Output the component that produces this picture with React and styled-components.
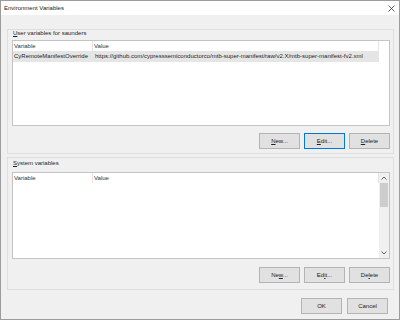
import React from 'react';
import styled, { createGlobalStyle } from 'styled-components';

const GlobalStyle = createGlobalStyle`
  html, body {
    margin: 0;
    padding: 0;
    background: #ffffff;
  }
  body {
    font-family: "Liberation Sans", Arial, sans-serif;
  }
`;

const Window = styled.div`
  width: 400px;
  height: 320px;
  box-sizing: border-box;
  border: 1px solid #9c9c9c;
  background: #f0f0f0;
  display: flex;
  flex-direction: column;
  font-size: 6px;
  color: #1e1e1e;
`;

const TitleBar = styled.div`
  height: 14px;
  flex: none;
  background: #ffffff;
  display: flex;
  align-items: center;
  justify-content: space-between;
  padding: 0 4px 0 3px;
`;

const Title = styled.span`
  font-size: 6px;
  color: #222;
`;

const Body = styled.div`
  flex: 1;
  display: flex;
  flex-direction: column;
  padding: 14px 5px 0 6px;
`;

const Group = styled.div`
  border: 1px solid #dedede;
  padding: 0 3px ${(p) => p.$bottom}px 4px;
  margin-bottom: 3px;
  display: flex;
  flex-direction: column;
`;

const GroupLabel = styled.div`
  height: ${(p) => p.$h}px;
  line-height: ${(p) => p.$lh}px;
  padding-left: 1px;
`;

const ListBox = styled.div`
  height: ${(p) => p.$h}px;
  box-sizing: border-box;
  border: 1px solid #c4c4c4;
  background: #ffffff;
  display: flex;
`;

const Columns = styled.div`
  flex: 1;
  display: flex;
  flex-direction: column;
`;

const HeaderRow = styled.div`
  display: flex;
  height: 10px;
  width: 366px;
`;

const HeaderCell = styled.div`
  width: ${(p) => p.$w}px;
  flex: ${(p) => (p.$w ? 'none' : '1')};
  border-right: 1px solid #e5e5e5;
  line-height: 10px;
  padding-left: 1px;
  color: #333;
`;

const DataRow = styled.div`
  display: flex;
  height: 11px;
  width: 366px;
  background: ${(p) => (p.$selected ? '#e5e5e5' : 'transparent')};
`;

const DataCell = styled.div`
  width: ${(p) => p.$w}px;
  flex: ${(p) => (p.$w ? 'none' : '1')};
  line-height: 11px;
  padding-left: ${(p) => (p.$w ? 1 : 2)}px;
  white-space: nowrap;
  overflow: hidden;
`;

const ScrollBar = styled.div`
  width: 10px;
  flex: none;
  background: #f0f0f0;
  display: flex;
  flex-direction: column;
`;

const ScrollArrow = styled.div`
  height: 10px;
  display: flex;
  align-items: center;
  justify-content: center;
`;

const ScrollTrack = styled.div`
  flex: 1;
`;

const Thumb = styled.div`
  height: 24px;
  margin: 0 1px;
  background: #cdcdcd;
`;

const ButtonRow = styled.div`
  display: flex;
  justify-content: flex-end;
  gap: ${(p) => p.$gap}px;
  margin-top: ${(p) => p.$top}px;
  margin-right: ${(p) => p.$right || 0}px;
`;

const Button = styled.div`
  width: 41px;
  height: 16px;
  box-sizing: border-box;
  border: 1px solid ${(p) => (p.$focused ? '#0078d7' : '#b4b4b4')};
  background: #e1e1e1;
  display: flex;
  align-items: center;
  justify-content: center;
  color: #222;
`;

const Up = () => (
  <svg width="6" height="4" viewBox="0 0 6 4">
    <path d="M0.5 3.5 L3 1 L5.5 3.5" fill="none" stroke="#606060" strokeWidth="1" />
  </svg>
);

const Down = () => (
  <svg width="6" height="4" viewBox="0 0 6 4">
    <path d="M0.5 0.5 L3 3 L5.5 0.5" fill="none" stroke="#606060" strokeWidth="1" />
  </svg>
);

const CloseIcon = () => (
  <svg width="7" height="7" viewBox="0 0 7 7">
    <path d="M0.5 0.5 L6.5 6.5 M6.5 0.5 L0.5 6.5" stroke="#333" strokeWidth="0.8" />
  </svg>
);

const userVars = [
  {
    name: 'CyRemoteManifestOverride',
    value: 'https://github.com/cypresssemiconductorco/mtb-super-manifest/raw/v2.X/mtb-super-manifest-fv2.xml',
  },
];

const App = () => {
  return (
    <>
      <GlobalStyle />
      <Window>
        <TitleBar>
          <Title>Environment Variables</Title>
          <CloseIcon />
        </TitleBar>
        <Body>
          <Group $bottom={4}>
            <GroupLabel $h={10} $lh={7}>
              <u>U</u>ser variables for saunders
            </GroupLabel>
            <ListBox $h={86}>
              <Columns>
                <HeaderRow>
                  <HeaderCell $w={78}>Variable</HeaderCell>
                  <HeaderCell>Value</HeaderCell>
                </HeaderRow>
                {userVars.map((v) => (
                  <DataRow key={v.name} $selected>
                    <DataCell $w={79}>{v.name}</DataCell>
                    <DataCell>{v.value}</DataCell>
                  </DataRow>
                ))}
              </Columns>
            </ListBox>
            <ButtonRow $gap={4} $top={7}>
              <Button><span><u>N</u>ew...</span></Button>
              <Button $focused><span><u>E</u>dit...</span></Button>
              <Button><span><u>D</u>elete</span></Button>
            </ButtonRow>
          </Group>
          <Group $bottom={6}>
            <GroupLabel $h={14} $lh={11}>
              <u>S</u>ystem variables
            </GroupLabel>
            <ListBox $h={87}>
              <Columns>
                <HeaderRow>
                  <HeaderCell $w={78}>Variable</HeaderCell>
                  <HeaderCell>Value</HeaderCell>
                </HeaderRow>
              </Columns>
              <ScrollBar>
                <ScrollArrow><Up /></ScrollArrow>
                <ScrollTrack>
                  <Thumb />
                </ScrollTrack>
                <ScrollArrow><Down /></ScrollArrow>
              </ScrollBar>
            </ListBox>
            <ButtonRow $gap={4} $top={8}>
              <Button><span>Ne<u>w</u>...</span></Button>
              <Button><span>Ed<u>i</u>t...</span></Button>
              <Button><span>De<u>l</u>ete</span></Button>
            </ButtonRow>
          </Group>
          <ButtonRow $gap={5} $top={5} $right={6}>
            <Button>OK</Button>
            <Button>Cancel</Button>
          </ButtonRow>
        </Body>
      </Window>
    </>
  );
};

export default App;
